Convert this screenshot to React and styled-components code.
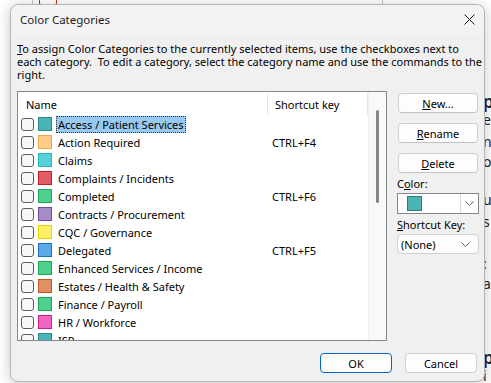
import React from "react";
import styled, { createGlobalStyle } from "styled-components";

const GlobalStyle = createGlobalStyle`
  html, body {
    margin: 0;
    padding: 0;
    background: #ffffff;
  }
  body {
    font-family: "Segoe UI", "Noto Sans", "Open Sans", sans-serif;
    font-size: 11px;
    color: #000;
    overflow: hidden;
  }
`;

const Desktop = styled.div`
  position: relative;
  width: 491px;
  height: 383px;
  overflow: hidden;
  background: #ffffff;
  padding: 4px 0 0 10px;
  box-sizing: border-box;
`;

// the Outlook window behind the dialog
const BehindFrame = styled.div`
  position: absolute;
  left: 32px;
  top: 0;
  width: 349px;
  height: 8px;
  border-left: 1px solid #c8c8c8;
  border-right: 1px solid #c8c8c8;
`;

const BehindIcon = styled.div`
  position: absolute;
  left: 39px;
  top: -3px;
  width: 16px;
  height: 6px;
  border: 1px solid #c42b1c;
  border-radius: 2px;
`;

const BehindText = styled.div`
  position: absolute;
  left: 483px;
  top: 0;
  display: flex;
  flex-direction: column;
  font-family: "Segoe UI", "Noto Sans", sans-serif;
  color: #242424;
  white-space: nowrap;
`;

const BehindLine = styled.div`
  margin-top: ${(p) => p.$gap}px;
  font-size: ${(p) => (p.$big ? 17 : 14)}px;
  font-weight: ${(p) => (p.$big ? 600 : 400)};
  line-height: ${(p) => (p.$big ? 20 : 16)}px;
`;

const Dialog = styled.div`
  position: relative;
  width: 475px;
  height: 378px;
  box-sizing: border-box;
  background: #f0f0f0;
  border: 1px solid #b4b4b4;
  border-radius: 8px;
  box-shadow: 0 2px 14px rgba(0, 0, 0, 0.22);
  display: flex;
  flex-direction: column;
`;

const TitleBar = styled.div`
  height: 29px;
  flex-shrink: 0;
  display: flex;
  align-items: center;
  justify-content: space-between;
  padding-left: 9px;
  background: #f3f3f3;
  border-radius: 8px 8px 0 0;
`;

const Title = styled.span`
  font-size: 11.5px;
  color: #1a1a1a;
`;

const CloseButton = styled.div`
  width: 30px;
  height: 29px;
  display: flex;
  align-items: center;
  justify-content: center;
`;

const Body = styled.div`
  flex: 1;
  display: flex;
  flex-direction: column;
  padding: 8px 7px 0 6px;
`;

const Description = styled.div`
  line-height: 13px;
  white-space: nowrap;
`;

const Main = styled.div`
  margin-top: 10px;
  display: flex;
  gap: 10px;
`;

const ListBox = styled.div`
  width: 371px;
  height: 250px;
  box-sizing: border-box;
  border: 1px solid #828790;
  background: #fff;
  display: flex;
`;

const ListInner = styled.div`
  flex: 1;
  display: flex;
  flex-direction: column;
  overflow: hidden;
`;

const HeaderRow = styled.div`
  height: 23px;
  flex-shrink: 0;
  display: flex;
`;

const HeaderCell = styled.div`
  width: ${(p) => p.$w}px;
  box-sizing: border-box;
  padding-left: ${(p) => p.$pad}px;
  display: flex;
  align-items: center;
  border-right: 1px solid #e5e5e5;
  margin: 1px 0 0;
`;

const Row = styled.div`
  height: 18px;
  flex-shrink: 0;
  display: flex;
  align-items: center;
`;

const NameCell = styled.div`
  width: 250px;
  display: flex;
  align-items: center;
  padding-left: 3px;
  box-sizing: border-box;
`;

const Check = styled.div`
  width: 11px;
  height: 11px;
  border: 1px solid #5c5c5c;
  border-radius: 3px;
  background: #f7f7f7;
  flex-shrink: 0;
`;

const Swatch = styled.div`
  width: 12px;
  height: 12px;
  margin-left: 4px;
  background: ${(p) => p.$fill};
  border: 1px solid ${(p) => p.$edge};
  flex-shrink: 0;
`;

const Label = styled.span`
  margin-left: 4px;
  padding: 0 1px;
  line-height: 15px;
  white-space: nowrap;
  border: 1px dotted ${(p) => (p.$selected ? "#333" : "transparent")};
  background: ${(p) => (p.$selected ? "#99c9ef" : "transparent")};
`;

const KeyCell = styled.div`
  padding-left: 4px;
  white-space: nowrap;
`;

const ScrollTrack = styled.div`
  width: 17px;
  flex-shrink: 0;
  background: #f9f9f9;
  border-left: 1px solid #f0f0f0;
  position: relative;
`;

const ScrollThumb = styled.div`
  position: absolute;
  left: 7px;
  top: 18px;
  width: 3px;
  height: 93px;
  border-radius: 2px;
  background: #858585;
`;

const Side = styled.div`
  width: 82px;
  padding-top: 2px;
  display: flex;
  flex-direction: column;
`;

const SideButton = styled.div`
  width: 80px;
  height: 20px;
  margin-left: 1px;
  margin-bottom: 10px;
  box-sizing: border-box;
  border: 1px solid #d0d0d0;
  border-bottom-color: #c2c2c2;
  border-radius: 4px;
  background: #fdfdfd;
  display: flex;
  align-items: center;
  justify-content: center;
`;

const FieldLabel = styled.div`
  line-height: 14px;
  margin-top: ${(p) => p.$top}px;
  margin-bottom: 2px;
  white-space: nowrap;
`;

const ColorCombo = styled.div`
  width: 82px;
  height: 21px;
  box-sizing: border-box;
  border: 1px solid #828790;
  background: #fff;
  display: flex;
  align-items: center;
`;

const ComboSwatch = styled.div`
  width: 13px;
  height: 13px;
  margin-left: 9px;
  background: #4bb5b5;
  border: 1px solid #2a7f80;
`;

const ComboArrow = styled.div`
  margin-left: auto;
  width: 17px;
  height: 19px;
  border-left: 1px solid #d9d9d9;
  display: flex;
  align-items: center;
  justify-content: center;
`;

const KeyCombo = styled.div`
  width: 82px;
  height: 20px;
  box-sizing: border-box;
  border: 1px solid #d0d0d0;
  border-radius: 4px;
  background: #fdfdfd;
  display: flex;
  align-items: center;
  justify-content: space-between;
  padding: 0 8px 0 3px;
`;

const Footer = styled.div`
  margin-top: 12px;
  display: flex;
  justify-content: flex-end;
  gap: 13px;
`;

const FooterButton = styled.div`
  width: 72px;
  height: 20px;
  box-sizing: border-box;
  border: 1px solid ${(p) => (p.$primary ? "#0067c0" : "#d0d0d0")};
  border-radius: 4px;
  background: #fdfdfd;
  display: flex;
  align-items: center;
  justify-content: center;
`;

const Chevron = () => (
  <svg width="9" height="5" viewBox="0 0 9 5">
    <path d="M0.5 0.5 L4.5 4.5 L8.5 0.5" fill="none" stroke="#5f5f5f" strokeWidth="1" />
  </svg>
);

const categories = [
  { name: "Access / Patient Services", fill: "#4bb5b5", edge: "#2a8a8a", selected: true },
  { name: "Action Required", fill: "#ffcc8c", edge: "#f0a64a", key: "CTRL+F4" },
  { name: "Claims", fill: "#55d1d9", edge: "#28b4c2" },
  { name: "Complaints / Incidents", fill: "#e05c66", edge: "#c41e2c" },
  { name: "Completed", fill: "#4fcf8d", edge: "#1ea85a", key: "CTRL+F6" },
  { name: "Contracts / Procurement", fill: "#a78bc9", edge: "#6e4ba0" },
  { name: "CQC / Governance", fill: "#fff06b", edge: "#f2d000" },
  { name: "Delegated", fill: "#5aa9e6", edge: "#1f6fc0", key: "CTRL+F5" },
  { name: "Enhanced Services / Income", fill: "#4fcf8d", edge: "#1ea85a" },
  { name: "Estates / Health & Safety", fill: "#e08f66", edge: "#c25a1f" },
  { name: "Finance / Payroll", fill: "#4fcf8d", edge: "#1ea85a" },
  { name: "HR / Workforce", fill: "#f064bf", edge: "#d1218f" },
  { name: "ISP", fill: "#4bb5b5", edge: "#2a8a8a" },
];

const behind = [
  { t: "p", gap: 92, big: true },
  { t: "er", gap: 0 },
  { t: "n", gap: 6 },
  { t: "o", gap: 4 },
  { t: "u", gap: 22 },
  { t: "s", gap: 6 },
  { t: ":", gap: 26 },
  { t: "a", gap: 4 },
  { t: "p", gap: 56, big: true },
  { t: "i", gap: 0 },
];

export default function App() {
  return (
    <Desktop>
      <GlobalStyle />
      <BehindFrame />
      <BehindIcon />
      <BehindText>
        {behind.map((b, i) => (
          <BehindLine key={i} $gap={b.gap} $big={b.big}>
            {b.t}
          </BehindLine>
        ))}
      </BehindText>
      <Dialog>
        <TitleBar>
          <Title>Color Categories</Title>
          <CloseButton>
            <svg width="11" height="11" viewBox="0 0 11 11">
              <path d="M0.5 0.5 L10.5 10.5 M10.5 0.5 L0.5 10.5" stroke="#1a1a1a" strokeWidth="1" />
            </svg>
          </CloseButton>
        </TitleBar>
        <Body>
          <Description>
            <u>T</u>o assign Color Categories to the currently selected items, use the checkboxes next to
            <br />
            each category.&nbsp; To edit a category, select the category name and use the commands to the
            <br />
            right.
          </Description>
          <Main>
            <ListBox>
              <ListInner>
                <HeaderRow>
                  <HeaderCell $w={250} $pad={8}>Name</HeaderCell>
                  <HeaderCell $w={100} $pad={7}>Shortcut key</HeaderCell>
                </HeaderRow>
                {categories.map((c) => (
                  <Row key={c.name}>
                    <NameCell>
                      <Check />
                      <Swatch $fill={c.fill} $edge={c.edge} />
                      <Label $selected={c.selected}>{c.name}</Label>
                    </NameCell>
                    <KeyCell>{c.key}</KeyCell>
                  </Row>
                ))}
              </ListInner>
              <ScrollTrack>
                <ScrollThumb />
              </ScrollTrack>
            </ListBox>
            <Side>
              <SideButton>
                <span><u>N</u>ew...</span>
              </SideButton>
              <SideButton>
                <span><u>R</u>ename</span>
              </SideButton>
              <SideButton>
                <span><u>D</u>elete</span>
              </SideButton>
              <FieldLabel $top={-6}>
                C<u>o</u>lor:
              </FieldLabel>
              <ColorCombo>
                <ComboSwatch />
                <ComboArrow>
                  <Chevron />
                </ComboArrow>
              </ColorCombo>
              <FieldLabel $top={4}>
                <u>S</u>hortcut Key:
              </FieldLabel>
              <KeyCombo>
                <span>(None)</span>
                <Chevron />
              </KeyCombo>
            </Side>
          </Main>
          <Footer>
            <FooterButton $primary>OK</FooterButton>
            <FooterButton>Cancel</FooterButton>
          </Footer>
        </Body>
      </Dialog>
    </Desktop>
  );
}
